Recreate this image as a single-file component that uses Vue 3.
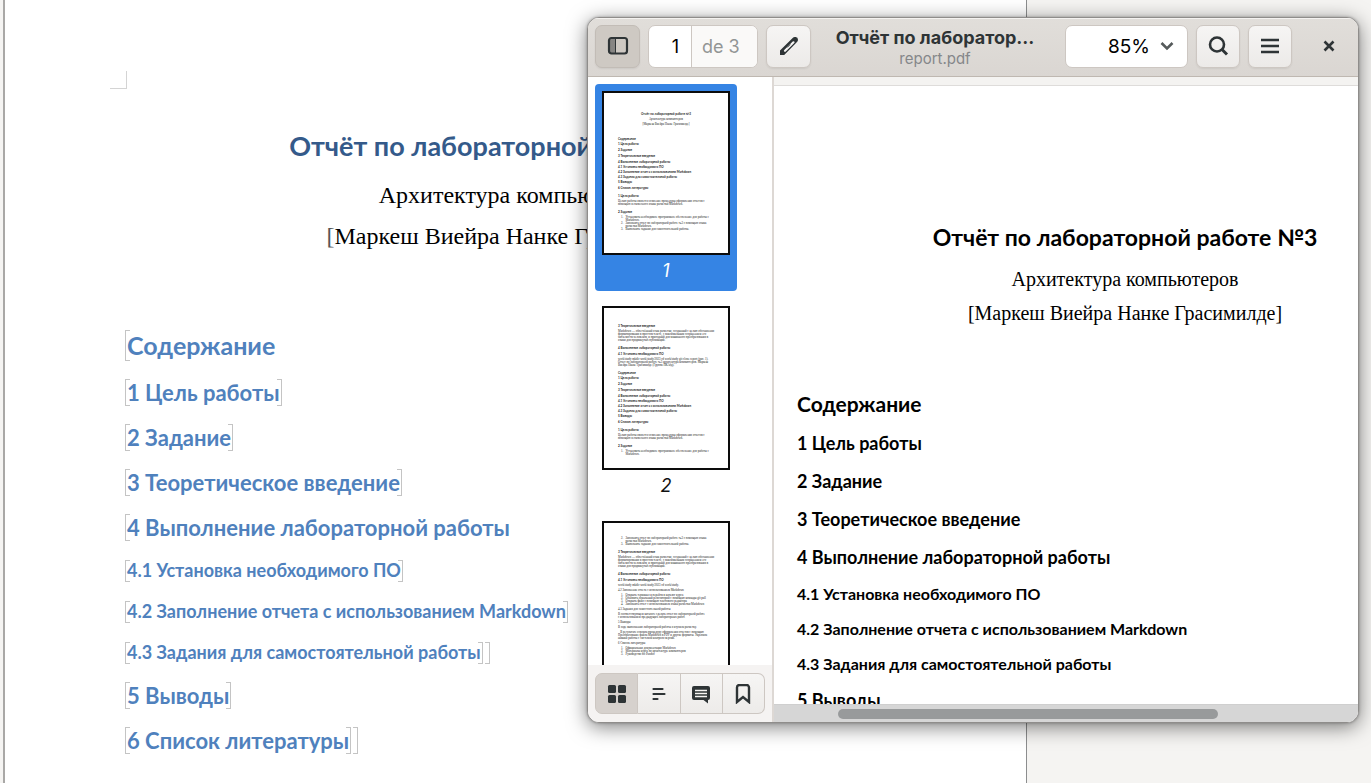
<script setup>
import { ref } from 'vue'

const title = 'Отчёт по лабораторной работе №3'
const subject = 'Архитектура компьютеров'
const author = 'Маркеш Виейра Нанке Грасимилде]'

const contents = [
  { level: 1, text: 'Содержание', close: 0 },
  { level: 2, text: '1 Цель работы', close: 1 },
  { level: 2, text: '2 Задание', close: 1 },
  { level: 2, text: '3 Теоретическое введение', close: 1 },
  { level: 2, text: '4 Выполнение лабораторной работы', close: 0 },
  { level: 3, text: '4.1 Установка необходимого ПО', close: 1 },
  { level: 3, text: '4.2 Заполнение отчета с использованием Markdown', close: 1 },
  { level: 3, text: '4.3 Задания для самостоятельной работы', close: 2 },
  { level: 2, text: '5 Выводы', close: 1 },
  { level: 2, text: '6 Список литературы', close: 2 },
]

const toc = contents.map((c) => ({ kind: 'toc' + c.level, lines: [c.text] }))
const goal = [
  { kind: 'head', lines: ['1 Цель работы'] },
  { kind: 'para', lines: ['Целью работы является освоение процедуры оформления отчетов с', 'помощью легковесного языка разметки Markdown.'] },
  { kind: 'head', lines: ['2 Задание'] },
]
const taskOne = { kind: 'item', lines: ['1.   Установить необходимое программное обеспечение для работы с', '      Markdown.'] }
const taskRest = [
  { kind: 'item', lines: ['2.   Заполнить отчет по лабораторной работе №3 с помощью языка', '      разметки Markdown.'] },
  { kind: 'item', lines: ['3.   Выполнить задания для самостоятельной работы.'] },
]
const theory = [
  { kind: 'head', lines: ['3 Теоретическое введение'] },
  {
    kind: 'para',
    lines: [
      'Markdown — облегчённый язык разметки, созданный с целью обозначения',
      'форматирования в простом тексте, с максимальным сохранением его',
      'читаемости человеком, и пригодный для машинного преобразования в',
      'языки для продвинутых публикаций.',
    ],
  },
  { kind: 'head', lines: ['4 Выполнение лабораторной работы'] },
  { kind: 'sub', lines: ['4.1 Установка необходимого ПО'] },
]

const pages = [
  {
    number: 1,
    cover: true,
    blocks: [...toc, ...goal, taskOne, ...taskRest],
  },
  {
    number: 2,
    blocks: [
      ...theory,
      {
        kind: 'para',
        lines: [
          'work/study mkdir work/study/2023 cd work/study git clone report (рис. 1).',
          'Отчет по лабораторной работе №3 архитектура компьютеров. Маркеш',
          'Виейра Нанке Грасимилде (Группа НКАбд).',
        ],
      },
      ...toc,
      ...goal,
      taskOne,
    ],
  },
  {
    number: 3,
    blocks: [
      ...taskRest,
      ...theory,
      { kind: 'para', lines: ['work/study mkdir work/study/2023 cd work/study.'] },
      { kind: 'para', lines: ['4.2 Заполнение отчета с использованием Markdown'] },
      {
        kind: 'item',
        lines: [
          '1.   Открыть терминал и перейти в каталог курса',
          '2.   Обновить локальный репозиторий с помощью команды git pull',
          '3.   Открыть файл с помощью текстового редактора',
          '4.   Заполнить отчет с использованием языка разметки Markdown',
        ],
      },
      { kind: 'para', lines: ['4.3 Задания для самостоятельной работы'] },
      { kind: 'para', lines: ['В соответствующем каталоге сделать отчет по лабораторной работе', 'с использованием предыдущих лабораторных работ.'] },
      { kind: 'para', lines: ['5 Выводы'] },
      { kind: 'para', lines: ['В ходе выполнения лабораторной работы я изучила разметку.'] },
      { kind: 'para', lines: ['   В результате освоила процедуру оформления отчетов с помощью', 'Преобразование файла Markdown в PDF и другие форматы. Укрепила', 'навыки работы с системой контроля версий.'] },
      { kind: 'para', lines: ['6 Список литературы'] },
      { kind: 'item', lines: ['1.   Официальная документация Markdown', '2.   Материалы курса по архитектуре компьютеров', '3.   Руководство по Pandoc'] },
    ],
  },
]

const current = ref(1)
const zoom = ref('85%')
</script>

<template>
  <div class="desktop">
    <main class="sheet">
      <i class="corner"></i>
      <h1 class="title">{{ title }}</h1>
      <p class="centered">{{ subject }}</p>
      <p class="centered"><span class="thin">[</span>{{ author }}</p>
      <section class="outline">
        <component :is="'h' + (c.level + 1)" v-for="c in contents" :key="c.text" class="row" :class="'level' + c.level">
          <span class="bracket open"></span>{{ c.text }}<span v-for="n in c.close" :key="n" class="bracket close"></span>
        </component>
      </section>
    </main>

    <section class="viewer" aria-label="report.pdf">
      <header class="bar">
        <button class="btn pressed" aria-label="Painel lateral">
          <svg width="22" height="22" viewBox="0 0 22 22">
            <path d="M3 4h5v14H3z" fill="#2e3436" opacity=".45" />
            <path d="M8.500 4v14" stroke="#2e3436" stroke-width="1" />
            <rect x="2" y="3" width="18" height="15.500" rx="2.500" fill="none" stroke="#2e3436" stroke-width="2.200" />
          </svg>
        </button>
        <div class="pager">
          <input v-model="current" class="page-input" aria-label="Página" />
          <span class="page-total">de 3</span>
        </div>
        <button class="btn" aria-label="Anotar">
          <svg width="22" height="22" viewBox="0 0 22 22">
            <path d="M2 20v-4.400L14.400 3.200q1.200-1.200 2.400-1.200h.800Q20 2.200 20 4.800q0 1.200-1 2.200L6.200 20z" fill="#2e3436" />
            <path d="m7 15.800 8.500-8.500" stroke="#f6f5f4" stroke-width="2.200" stroke-linecap="round" />
            <path d="m9.500 12.500 3-3" stroke="#2e3436" stroke-width=".6" />
          </svg>
        </button>
        <div class="heading">
          <strong>Отчёт по лаборатор…</strong>
          <small>report.pdf</small>
        </div>
        <div class="zoom">
          <input v-model="zoom" aria-label="Ampliação" />
          <button aria-label="Níveis de ampliação">
            <svg width="14" height="10" viewBox="0 0 14 10">
              <path d="M1.500 2 7 7.500 12.500 2" fill="none" stroke="#555a5b" stroke-width="2.600" />
            </svg>
          </button>
        </div>
        <button class="btn slim" aria-label="Localizar">
          <svg width="22" height="22" viewBox="0 0 22 22">
            <circle cx="10" cy="9.500" r="7" fill="none" stroke="#2e3436" stroke-width="2.600" />
            <path d="m15 14.500 5 5" stroke="#2e3436" stroke-width="3" />
          </svg>
        </button>
        <button class="btn slim" aria-label="Menu">
          <svg width="22" height="22" viewBox="0 0 22 22">
            <path d="M2 5h18M2 11h18M2 17h18" stroke="#2e3436" stroke-width="2.400" />
          </svg>
        </button>
        <button class="close-btn" aria-label="Fechar">
          <svg width="12" height="12" viewBox="0 0 12 12">
            <path d="m1.500 1.500 9 9M10.500 1.500l-9 9" stroke="#2e3436" stroke-width="2.600" />
          </svg>
        </button>
      </header>

      <div class="panes">
        <aside class="side">
          <div class="thumbs">
            <figure v-for="p in pages" :key="p.number" class="thumb" :class="{ selected: p.number === current }">
              <div class="mini">
                <div v-if="p.cover" class="mini-cover">
                  <b>{{ title }}</b>
                  <span>{{ subject }}</span>
                  <span>[{{ author }}</span>
                </div>
                <div v-for="(b, i) in p.blocks" :key="i" :class="['mini-block', b.kind]">
                  <div v-for="line in b.lines" :key="line">{{ line }}</div>
                </div>
              </div>
              <figcaption>{{ p.number }}</figcaption>
            </figure>
          </div>
          <nav class="tabs">
            <button class="tab pressed" aria-label="Miniaturas">
              <svg width="20" height="20" viewBox="0 0 20 20" fill="#2e3436">
                <rect x="1" y="1" width="8" height="8" rx="1.500" /><rect x="11" y="1" width="8" height="8" rx="1.500" />
                <rect x="1" y="11" width="8" height="8" rx="1.500" /><rect x="11" y="11" width="8" height="8" rx="1.500" />
              </svg>
            </button>
            <button class="tab" aria-label="Sumário">
              <svg width="20" height="20" viewBox="0 0 20 20">
                <path d="M4.500 5h9M4.500 10h11M4.500 15h4" stroke="#2e3436" stroke-width="2.200" stroke-linecap="round" />
              </svg>
            </button>
            <button class="tab" aria-label="Anotações">
              <svg width="20" height="20" viewBox="0 0 20 20">
                <path d="M3 2h14a2 2 0 0 1 2 2v10a2 2 0 0 1-2 2v3.500L12.500 16H3a2 2 0 0 1-2-2V4a2 2 0 0 1 2-2z" fill="#2e3436" />
                <path d="M4 6.500h12M4 9.500h12M4 12.500h12" stroke="#f6f5f4" stroke-width="1.300" />
              </svg>
            </button>
            <button class="tab" aria-label="Marcadores">
              <svg width="20" height="20" viewBox="0 0 20 20">
                <path d="M4 18V3.500A2.500 2.500 0 0 1 6.500 1h7A2.500 2.500 0 0 1 16 3.500V18l-6-5z" fill="none" stroke="#2e3436" stroke-width="2.400" />
              </svg>
            </button>
          </nav>
        </aside>

        <div class="view">
          <article class="pdf">
            <h1 class="title">{{ title }}</h1>
            <p class="centered">{{ subject }}</p>
            <p class="centered">[{{ author }}</p>
            <section class="outline">
              <component :is="'h' + (c.level + 1)" v-for="c in contents" :key="c.text" class="row" :class="'level' + c.level">{{ c.text }}</component>
            </section>
          </article>
          <div class="scroll"><i></i></div>
        </div>
      </div>
    </section>
  </div>
</template>

<style>
html,
body {
  margin: 0;
  overflow: hidden;
}
</style>

<style scoped>
* {
  box-sizing: border-box;
}
.desktop {
  position: relative;
  height: 100vh;
  overflow: hidden;
  background: #f5f4f2;
  font-family: Inter, 'Noto Sans', sans-serif;
}
h1,
h2,
h3,
h4,
p,
figure {
  margin: 0;
}
button,
input {
  font: inherit;
  color: inherit;
  padding: 0;
  border: 0;
  background: none;
}

/* Word processor page */
.sheet {
  width: 1024px;
  max-width: 75%;
  height: 100%;
  margin-left: 3px;
  padding: 71px 122px 0 121px;
  border-left: 2px solid #a9a8a6;
  border-right: 1px solid #8c8d8e;
  background: #fff;
  white-space: nowrap;
}
.corner {
  display: block;
  width: 17px;
  height: 18px;
  margin-left: -16px;
  border-right: 1px solid #d4d4d4;
  border-bottom: 1px solid #d4d4d4;
}
.title,
.row {
  font-family: Lato, 'Noto Sans', sans-serif;
  font-weight: 700;
}
.sheet .title {
  margin: 36px 0 8px;
  font-size: 27px;
  line-height: 42px;
  text-align: center;
  color: #345a8a;
}
.centered {
  text-align: center;
  font-family: 'Liberation Serif', serif;
}
.sheet .centered {
  font-size: 24px;
  line-height: 41px;
  color: #000;
}
.thin {
  color: #555;
}
.outline {
  margin-top: 64px;
}
.row {
  display: flex;
  align-items: center;
}
.sheet .row {
  color: #4f81bd;
}
.bracket {
  flex: none;
  width: 5px;
  height: 27px;
  border: 1px solid #c4c4c4;
}
.open {
  margin-left: -1px;
  margin-right: -3px;
  border-right: 0;
}
.close {
  margin-left: -3px;
  border-left: 0;
}
.close + .close {
  margin-left: 2px;
}
.sheet .level1 {
  font-size: 25px;
  line-height: 49px;
}
.level1 .bracket {
  height: 31px;
}
.sheet .level2 {
  font-size: 22px;
  line-height: 45px;
}
.sheet .level3 {
  font-size: 18px;
  line-height: 41px;
}
.level3 .bracket {
  height: 22px;
}

/* Viewer window */
.viewer {
  position: absolute;
  top: 17px;
  right: 12px;
  bottom: 60px;
  left: 587px;
  display: flex;
  flex-direction: column;
  overflow: hidden;
  border: 1px solid #8f8d8b;
  border-radius: 12px;
  background: #fff;
  box-shadow: 0 4px 20px rgba(0, 0, 0, 0.5), 0 0 3px rgba(0, 0, 0, 0.3);
}
.bar {
  flex: none;
  display: flex;
  align-items: center;
  gap: 8px;
  height: 59px;
  padding: 0 0 2px 7px;
  border-bottom: 1px solid #bfb8b1;
  background: linear-gradient(#e1deda, #dad6d2);
  box-shadow: inset 0 1px #f4f2f0;
  color: #2e3436;
}
.btn,
.close-btn {
  flex: none;
  display: flex;
  align-items: center;
  justify-content: center;
  width: 45px;
  height: 43px;
}
.btn {
  border: 1px solid #cdc7c2;
  border-radius: 7px;
  background: linear-gradient(#f6f5f4, #eceae8);
  box-shadow: 0 1px 2px rgba(0, 0, 0, 0.07);
}
.btn.pressed {
  background: #cec9c3;
  border-color: #c2bcb6;
}
.slim {
  width: 44px;
}
.close-btn {
  width: 58px;
}
.pager {
  flex: none;
  display: flex;
  width: 110px;
  height: 43px;
  border: 1px solid #cdc7c2;
  border-radius: 7px;
  overflow: hidden;
  background: #fff;
  font-size: 18px;
}
.page-input {
  width: 43px;
  padding-right: 12px;
  text-align: right;
  color: #000;
  border-right: 1px solid #cdc7c2;
}
.page-total {
  flex: 1;
  padding-left: 10px;
  line-height: 41px;
  background: #faf9f8;
  color: #929595;
}
.heading {
  flex: 1;
  min-width: 0;
  display: flex;
  flex-direction: column;
  align-items: center;
  padding: 3px 6px 0 0;
  white-space: nowrap;
}
.heading strong {
  font-size: 18px;
  line-height: 22px;
}
.heading small {
  font-size: 15px;
  line-height: 20px;
  color: #85878a;
}
.zoom {
  flex: none;
  display: flex;
  align-items: center;
  width: 123px;
  height: 43px;
  border: 1px solid #cdc7c2;
  border-radius: 7px;
  background: #fff;
  font-size: 19px;
  color: #000;
}
.zoom input {
  width: 84px;
  text-align: right;
}
.zoom button {
  margin-left: 10px;
  display: flex;
}
.panes {
  flex: 1;
  min-height: 0;
  display: flex;
}
.side {
  flex: none;
  display: flex;
  flex-direction: column;
  width: 186px;
  border-right: 2px solid #ddd8d4;
}
.thumbs {
  flex: 1;
  min-height: 0;
  overflow: hidden;
  display: flex;
  flex-direction: column;
  align-items: flex-start;
  gap: 8px;
  padding: 7px;
}
.thumb {
  flex: none;
  width: 142px;
  height: 207px;
  padding: 7px;
  border-radius: 4px;
  color: #111;
}
.thumb.selected {
  background: #3584e4;
  color: #fff;
}
.thumb figcaption {
  font-size: 18px;
  line-height: 32px;
  font-style: italic;
  text-align: center;
}
.mini {
  width: 128px;
  height: 164px;
  padding: 14px;
  overflow: hidden;
  border: 2px solid #0c0c0c;
  background: #fff;
  color: #222;
  font-family: 'Liberation Serif', serif;
  font-size: 3px;
  line-height: 3px;
  white-space: pre;
}
.mini-cover {
  display: flex;
  flex-direction: column;
  align-items: center;
  gap: 2px;
  margin: 5px 0 7px;
}
.mini-cover b {
  font-family: Lato, sans-serif;
  line-height: 4px;
}
.toc1,
.toc2,
.toc3,
.head,
.sub {
  font-family: Lato, sans-serif;
  font-weight: 700;
}
.toc1 {
  padding-top: 5px;
}
.toc2,
.toc3 {
  padding-top: 2px;
}
.toc2 + .toc2 {
  padding-top: 3px;
}
.head {
  padding-top: 5px;
}
.head:first-child {
  padding-top: 3px;
}
.sub {
  padding-top: 3px;
}
.para {
  padding-top: 2px;
}
.item {
  padding-left: 3px;
}
.head + .item,
.para + .item {
  padding-top: 2px;
}
.tabs {
  flex: none;
  display: flex;
  height: 57px;
  padding: 8px 7px;
  background: #f5f3f2;
}
.tab {
  flex: 1;
  display: flex;
  align-items: center;
  justify-content: center;
  border: 1px solid #cdc7c2;
  border-left-width: 0;
  background: linear-gradient(#f6f5f4, #edebe9);
}
.tab:first-child {
  border-left-width: 1px;
  border-radius: 7px 0 0 7px;
}
.tab:last-child {
  border-radius: 0 7px 7px 0;
}
.tab.pressed {
  background: #d6d1cd;
}
.view {
  flex: 1;
  min-width: 0;
  display: flex;
  flex-direction: column;
  overflow: hidden;
  padding-top: 8px;
  background: #f4f3f1;
}
.pdf {
  flex: 1;
  min-height: 0;
  width: 702px;
  overflow: hidden;
  padding: 130px 23px 0;
  border-top: 1px solid #dedcda;
  background: #fff;
  color: #000;
  white-space: nowrap;
}
.pdf .title {
  margin-bottom: 4px;
  font-size: 23px;
  line-height: 42px;
  text-align: center;
}
.pdf .centered {
  font-size: 20px;
  line-height: 34px;
}
.pdf .outline {
  margin-top: 54px;
}
.pdf .level1 {
  font-size: 21px;
  line-height: 40px;
}
.pdf .level2 {
  font-size: 18px;
  line-height: 38px;
}
.pdf .level3 {
  font-size: 16px;
  line-height: 35px;
}
.scroll {
  flex: none;
  height: 18px;
  padding: 4px 0 0 64px;
  background: #d6d6d6;
  border-top: 1px solid #cfcfcf;
}
.scroll i {
  display: block;
  width: 73%;
  max-width: 381px;
  height: 10px;
  border-radius: 5px;
  background: #989a9b;
}
</style>
